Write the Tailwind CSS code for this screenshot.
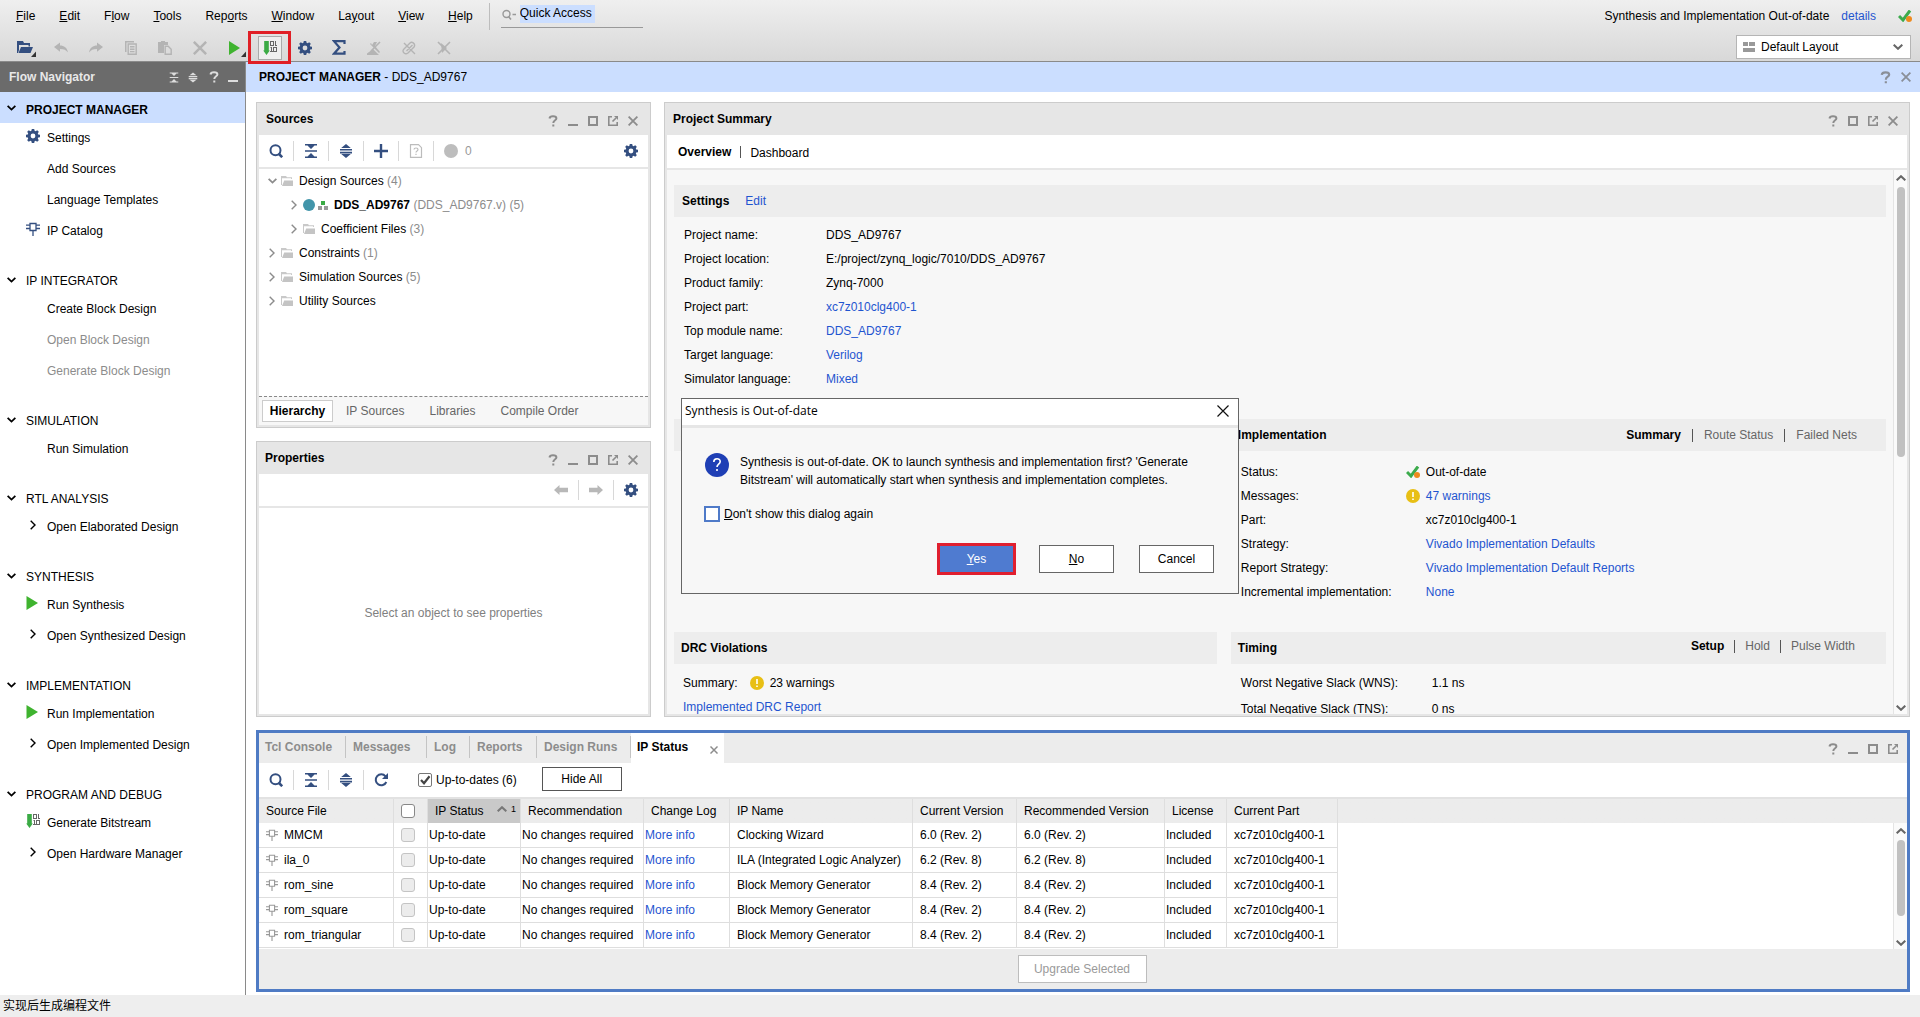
<!DOCTYPE html>
<html lang="en">
<head>
<meta charset="utf-8">
<title>Vivado - DDS_AD9767</title>
<script src="https://cdn.jsdelivr.net/npm/@tailwindcss/browser@4"></script>
</head>
<body class="bg-white text-black text-[12px] leading-4 font-['Liberation_Sans','Noto_Sans_CJK_SC',sans-serif]">
<svg class="hidden" aria-hidden="true">
  <symbol id="gear" viewBox="0 0 14 14"><path fill="currentColor" fill-rule="evenodd" d="M5.8 0h2.4l.4 1.8 1 .4L11.200 1.200l1.600 1.600-1 1.600.4 1 1.800.4v2.400l-1.800.4-.4 1 1 1.600-1.600 1.600-1.600-1-1 .4L8.200 14H5.800l-.4-1.800-1-.4-1.600 1-1.600-1.600 1-1.600-.4-1L0 8.200V5.800l1.800-.4.4-1-1-1.600 1.600-1.600 1.600 1 1-.4zM7 4.600a2.400 2.400 0 1 0 0 4.800 2.400 2.400 0 0 0 0-4.800z"/></symbol>
  <symbol id="search" viewBox="0 0 14 14"><circle cx="6.500" cy="6.300" r="5" fill="none" stroke="currentColor" stroke-width="2"/><path d="M9.500 9.500l3.700 3.700" stroke="currentColor" stroke-width="2.600"/></symbol>
  <symbol id="collapse" viewBox="0 0 14 14"><path fill="currentColor" d="M1 0h12v1.500H10.500L7 5 3.500 1.500H1zM1 14h12v-1.500H10.500L7 9 3.500 12.500H1zM1 6.200h12v1.600H1z" /></symbol>
  <symbol id="expand" viewBox="0 0 14 14"><path fill="currentColor" d="M7 0l4.800 4H2.200zM7 14l4.800-4H2.200zM1 5h12v1.600H1zM1 7.800h12v1.600H1z"/></symbol>
  <symbol id="help" viewBox="0 0 10 12"><path fill="none" stroke="currentColor" stroke-width="2" d="M1.500 3.500C1.700 2 3 1.200 5 1.200s3.400.8 3.400 2.200C8.400 5.300 5.300 5.200 5.300 8M5.300 9.400v2"/></symbol>
  <symbol id="mini" viewBox="0 0 10 10"><path fill="currentColor" d="M0 8h10v2H0z"/></symbol>
  <symbol id="maxi" viewBox="0 0 10 10"><path fill="none" stroke="currentColor" stroke-width="2" d="M1 1h8v8H1z"/></symbol>
  <symbol id="float" viewBox="0 0 10 10"><path fill="none" stroke="currentColor" stroke-width="1.600" d="M4 .8H.8v8.400h8.400V6M4.500 5.500L8 2"/><path fill="currentColor" d="M6 0h4v4z"/></symbol>
  <symbol id="close" viewBox="0 0 10 10"><path fill="none" stroke="currentColor" stroke-width="1.800" d="M.6.6l8.800 8.800M9.400.6L.6 9.400"/></symbol>
  <symbol id="down" viewBox="0 0 10 6"><path fill="none" stroke="currentColor" stroke-width="2" d="M.7.7L5 4.800 9.300.7"/></symbol>
  <symbol id="up" viewBox="0 0 10 6"><path fill="none" stroke="currentColor" stroke-width="2" d="M.7 5.300L5 1.200l4.300 4.100"/></symbol>
  <symbol id="right" viewBox="0 0 6 10"><path fill="none" stroke="currentColor" stroke-width="1.400" d="M.7.7L5 5 .7 9.300"/></symbol>
  <symbol id="chip" viewBox="0 0 14 14"><path fill="none" stroke="currentColor" stroke-width="1.300" d="M4 1.500h6v7H4zM0 3.200h4M0 6.500h4M10 3.200h4M10 6.500h4M7 8.500V14"/></symbol>
  <symbol id="play" viewBox="0 0 12 14"><path fill="#3fb32f" d="M.5 0L12 7 .5 14z"/></symbol>
  <symbol id="bits" viewBox="0 0 14 14"><path fill="#3bab45" d="M1.200 0h4.600v9.500h1L3.500 14 .2 9.500h1z"/><path fill="#666" fill-rule="evenodd" d="M7 0h4v5H7zM8 1v3h2V1zM12 0h1v4h1v1h-2zM8 6h1v4h1v1H7v-1h1V7H7zM10 6h4v5h-4zM11 7v3h2V7z"/></symbol>
  <symbol id="folder" viewBox="0 0 12 10"><path fill="#c9c9c9" d="M0 0h5l1 1.200h5V3H10V2.200H1V9H0z"/><path fill="#c4c4c4" d="M3.200 4.500H12V10H1z"/></symbol>
  <symbol id="stale" viewBox="0 0 14 12"><path fill="none" stroke="#3cab4c" stroke-width="3" d="M1 6l4 4 7-9.500"/><circle cx="11" cy="9" r="3" fill="#ef8a1d"/></symbol>
  <symbol id="warn" viewBox="0 0 14 14"><circle cx="7" cy="7" r="7" fill="#e8bf14"/><path fill="#fff" d="M6.200 3h1.600v5H6.200zM6.200 9.400h1.600V11H6.200z"/></symbol>
  <symbol id="undo" viewBox="0 0 14 10"><path fill="currentColor" d="M0 4.500L6 0v3c4 0 7 2 8 7-2-2.500-4-3.500-8-3.500v2.800z"/></symbol>
  <symbol id="arrow" viewBox="0 0 14 10"><path fill="currentColor" d="M14 5L8.500 0v2.700H0v4.600h8.500V10z"/></symbol>
</svg>

<div class="flex h-screen min-h-[900px] flex-col">
  <header class="flex h-[62px] shrink-0 justify-between border-b border-[#8a8a8a] bg-linear-to-b from-[#efefef] to-[#d8d8d8]">
    <div class="flex flex-col">
      <div class="flex h-[31px] items-start">
        <nav class="flex gap-6 pt-2 pl-4">
          <button><u>F</u>ile</button><button><u>E</u>dit</button><button>F<u>l</u>ow</button><button><u>T</u>ools</button><button>Rep<u>o</u>rts</button><button><u>W</u>indow</button><button>La<u>y</u>out</button><button><u>V</u>iew</button><button><u>H</u>elp</button>
        </nav>
        <div class="mt-[3px] ml-4 h-[27px] w-px bg-[#bdbdbd]"></div>
        <label class="mt-[5px] ml-[11px] flex h-[23px] w-[142px] items-start border-b border-[#999]">
          <svg class="mt-1 ml-px h-3 w-4 text-[#999]" viewBox="0 0 16 12"><circle cx="4.500" cy="5" r="3.500" fill="none" stroke="currentColor" stroke-width="1.400"/><path stroke="currentColor" stroke-width="1.600" d="M6.500 7.500L9 10.500M10.500 5.500H14"/></svg>
          <input aria-label="Quick Access" value="Quick Access" class="ml-0.5 h-[18px] w-[75px] bg-[#cbdeff] pb-0.5 outline-none">
        </label>
      </div>
      <div class="ml-[9px] grid h-[30px] w-[452px] grid-cols-13 items-center justify-items-center text-[#b4b4b4]">
        <button aria-label="Open" class="flex"><svg class="h-[18px] w-5" viewBox="0 0 20 18"><path fill="#344f80" d="M1 2h6l1 2h6v3.500h-1.500V6H3v5l-1 3H1z"/><path fill="#344f80" d="M5 8h12l-2.500 6H2.500z"/><path fill="#333" d="M20 12.500V18h-5z"/></svg></button>
        <button aria-label="Undo"><svg class="h-[11px] w-[14px]"><use href="#undo"/></svg></button>
        <button aria-label="Redo"><svg class="h-[11px] w-[14px] -scale-x-100"><use href="#undo"/></svg></button>
        <button aria-label="Copy"><svg class="h-[14px] w-3" viewBox="0 0 12 14"><path fill="currentColor" d="M0 0h9v1.500H1.500V11H0z"/><path fill="none" stroke="currentColor" stroke-width="1.400" d="M3.200 3h8v10.300h-8zM5 5.800h4.500M5 8.200h4.500M5 10.600h4.500"/></svg></button>
        <button aria-label="Paste"><svg class="h-[14px] w-[14px]" viewBox="0 0 14 14"><path fill="currentColor" d="M0 1h3V0h4v1h3v3H6v8H0z"/><path fill="none" stroke="currentColor" stroke-width="1.400" d="M7.200 5.200h3l3 3v5h-6z"/></svg></button>
        <button aria-label="Delete"><svg class="h-[14px] w-[14px]"><use href="#close"/></svg></button>
        <button aria-label="Run" class="flex"><svg class="ml-1 h-[18px] w-[18px]" viewBox="0 0 18 18"><path fill="#3fb32f" d="M1 2l11 7L1 16z"/><path fill="#333" d="M18 12.500V18h-5z"/></svg></button>
        <div class="z-10 flex h-[33px] w-[43px] items-center justify-center border-3 border-[#e01f26]"><button aria-label="Generate Bitstream" class="flex h-6 w-6 items-center justify-center border border-[#aaa] bg-[#efefef]"><svg class="h-[14px] w-[14px]"><use href="#bits"/></svg></button></div>
        <button aria-label="Settings"><svg class="h-[14px] w-[14px] text-[#344f80]"><use href="#gear"/></svg></button>
        <button aria-label="Report"><svg class="h-[15px] w-[14px]" viewBox="0 0 14 15"><path fill="none" stroke="#344f80" stroke-width="2.200" d="M12.500 4V1.200H2L7.500 7.500 2 13.700h10.500V11"/></svg></button>
        <button aria-label="Edit timing"><svg class="h-[14px] w-[14px]" viewBox="0 0 14 14"><path fill="currentColor" d="M6 8l6 6H0v-1.500zM5 4l2-3h3L8 5l5 6-1 1-9-9 1-1z"/><path stroke="currentColor" stroke-width="1.600" d="M13 1L4 10"/></svg></button>
        <button aria-label="Clear marks"><svg class="h-[14px] w-[14px]" viewBox="0 0 14 14"><path fill="none" stroke="currentColor" stroke-width="1.400" d="M1.500 8.500l6.500-6.500c2-2 6 1 4 4l-6 6c-3 2-6-1-4.500-3.500zM2 2l11 11M4.500 10l6-6"/></svg></button>
        <button aria-label="Cancel marks"><svg class="h-[14px] w-[14px]" viewBox="0 0 14 14"><path fill="none" stroke="currentColor" stroke-width="1.600" d="M1 1l12 12M13 1L1 13"/><path fill="currentColor" d="M4 2l6 5-5 5z"/></svg></button>
      </div>
    </div>
    <div class="flex flex-col items-end">
      <div class="flex h-[35px] items-center pr-2 pb-[3px]"><span>Synthesis and Implementation Out-of-date</span><a href="#" class="ml-3 text-[#1f55d0]">details</a><svg class="ml-[22px] h-3 w-[14px]"><use href="#stale"/></svg></div>
      <div class="relative mr-[9px] flex items-center">
        <select aria-label="Layout" class="h-6 w-[175px] appearance-none border border-[#b5b5b5] bg-white pl-6"><option>Default Layout</option></select>
        <svg class="absolute left-[7px] h-[10px] w-3" viewBox="0 0 12 10"><path fill="#999" d="M0 0h5v4H0zM6 0h6v4H6zM0 6h12v4H0z"/></svg>
        <svg class="pointer-events-none absolute right-2 h-[6px] w-[10px] text-[#666]"><use href="#down"/></svg>
      </div>
    </div>
  </header>

  <div class="flex min-h-0 flex-1">
    <aside class="w-[246px] shrink-0 border-r border-[#8a8a8a] [&_a]:pb-0.5">
      <div class="flex h-[30px] items-center bg-[#6b6b6b] px-[9px] text-[#e8e8e8]">
        <h2 class="flex-1 font-bold">Flow Navigator</h2>
        <div class="flex items-center gap-[9px] text-[#ddd]">
          <svg class="h-[11px] w-[10px]"><use href="#collapse"/></svg><svg class="h-[11px] w-[10px]"><use href="#expand"/></svg><svg class="ml-0.5 h-3 w-[10px]"><use href="#help"/></svg><svg class="-mr-0.5 h-[10px] w-[10px]"><use href="#mini"/></svg>
        </div>
      </div>
      <section class="mb-[21px]">
        <h3 class="flex h-[31px] items-center gap-[10px] bg-[#cbdeff] pt-1 pl-[7px] font-bold"><svg class="-mt-[3px] h-[6px] w-[9px]"><use href="#down"/></svg>PROJECT MANAGER</h3>
        <a href="#" class="flex h-[31px] items-center gap-[7px] pl-[26px]"><svg class="-mt-1 h-[14px] w-[14px] text-[#344f80]"><use href="#gear"/></svg>Settings</a>
        <a href="#" class="flex h-[31px] items-center pl-[47px]">Add Sources</a>
        <a href="#" class="flex h-[31px] items-center pl-[47px]">Language Templates</a>
        <a href="#" class="flex h-[31px] items-center gap-[7px] pl-[26px]"><svg class="-mt-1 h-[14px] w-[14px] text-[#344f80]"><use href="#chip"/></svg>IP Catalog</a>
      </section>
      <section class="mb-[21px]">
        <h3 class="flex h-[26px] items-center gap-[10px] pl-[7px]"><svg class="-mt-[3px] h-[6px] w-[9px]"><use href="#down"/></svg>IP INTEGRATOR</h3>
        <a href="#" class="flex h-[31px] items-center pl-[47px]">Create Block Design</a>
        <a href="#" class="flex h-[31px] items-center pl-[47px] text-[#8c8c8c]">Open Block Design</a>
        <a href="#" class="flex h-[31px] items-center pl-[47px] text-[#8c8c8c]">Generate Block Design</a>
      </section>
      <section class="mb-[21px]">
        <h3 class="flex h-[26px] items-center gap-[10px] pl-[7px]"><svg class="-mt-[3px] h-[6px] w-[9px]"><use href="#down"/></svg>SIMULATION</h3>
        <a href="#" class="flex h-[31px] items-center pl-[47px]">Run Simulation</a>
      </section>
      <section class="mb-[21px]">
        <h3 class="flex h-[26px] items-center gap-[10px] pl-[7px]"><svg class="-mt-[3px] h-[6px] w-[9px]"><use href="#down"/></svg>RTL ANALYSIS</h3>
        <a href="#" class="flex h-[31px] items-center gap-[11px] pl-[30px]"><svg class="-mt-[3px] h-[10px] w-[6px]"><use href="#right"/></svg>Open Elaborated Design</a>
      </section>
      <section class="mb-[21px]">
        <h3 class="flex h-[26px] items-center gap-[10px] pl-[7px]"><svg class="-mt-[3px] h-[6px] w-[9px]"><use href="#down"/></svg>SYNTHESIS</h3>
        <a href="#" class="flex h-[31px] items-center gap-[9px] pl-[26px]"><svg class="-mt-[3px] h-[14px] w-3"><use href="#play"/></svg>Run Synthesis</a>
        <a href="#" class="flex h-[31px] items-center gap-[11px] pl-[30px]"><svg class="-mt-[3px] h-[10px] w-[6px]"><use href="#right"/></svg>Open Synthesized Design</a>
      </section>
      <section class="mb-[21px]">
        <h3 class="flex h-[26px] items-center gap-[10px] pl-[7px]"><svg class="-mt-[3px] h-[6px] w-[9px]"><use href="#down"/></svg>IMPLEMENTATION</h3>
        <a href="#" class="flex h-[31px] items-center gap-[9px] pl-[26px]"><svg class="-mt-[3px] h-[14px] w-3"><use href="#play"/></svg>Run Implementation</a>
        <a href="#" class="flex h-[31px] items-center gap-[11px] pl-[30px]"><svg class="-mt-[3px] h-[10px] w-[6px]"><use href="#right"/></svg>Open Implemented Design</a>
      </section>
      <section>
        <h3 class="flex h-[26px] items-center gap-[10px] pl-[7px]"><svg class="-mt-[3px] h-[6px] w-[9px]"><use href="#down"/></svg>PROGRAM AND DEBUG</h3>
        <a href="#" class="flex h-[31px] items-center gap-[7px] pl-[26px]"><svg class="-mt-1 h-[14px] w-[14px]"><use href="#bits"/></svg>Generate Bitstream</a>
        <a href="#" class="flex h-[31px] items-center gap-[11px] pl-[30px]"><svg class="-mt-[3px] h-[10px] w-[6px]"><use href="#right"/></svg>Open Hardware Manager</a>
      </section>
    </aside>

    <main class="flex min-w-0 flex-1 flex-col">
      <div class="flex h-[30px] shrink-0 items-center bg-[#cbdeff] pr-[9px] pl-[13px]">
        <h1 class="flex-1"><b>PROJECT MANAGER</b> - DDS_AD9767</h1>
        <div class="flex items-center gap-[10px] text-[#8a8f98]"><svg class="h-[13px] w-[11px]"><use href="#help"/></svg><svg class="h-[10px] w-[10px]"><use href="#close"/></svg></div>
      </div>

      <div class="flex min-h-0 flex-1 gap-[13px] pt-[10px] pr-[10px] pl-[10px]">
        <div class="flex w-[395px] shrink-0 flex-col gap-[13px]">
          <section class="flex h-[326px] flex-col border border-[#ccc] bg-[#e6e6e6] px-0.5 pb-0.5">
            <div class="flex h-8 shrink-0 items-center pr-[10px] pl-[7px]">
              <h2 class="flex-1 font-bold">Sources</h2>
              <div class="mt-1 flex items-center gap-[10px] text-[#8c8c8c]"><svg class="h-3 w-[10px]"><use href="#help"/></svg><svg class="h-[10px] w-[10px]"><use href="#mini"/></svg><svg class="h-[10px] w-[10px]"><use href="#maxi"/></svg><svg class="h-[10px] w-[10px]"><use href="#float"/></svg><svg class="h-[10px] w-[10px]"><use href="#close"/></svg></div>
            </div>
            <div class="mb-0.5 flex h-8 shrink-0 items-center gap-[10px] bg-white pr-[10px] pl-[10px] text-[#344f80]">
              <svg class="h-[14px] w-[14px]"><use href="#search"/></svg><i class="h-5 w-px bg-[#d8d8d8]"></i>
              <svg class="h-[14px] w-[14px]"><use href="#collapse"/></svg><i class="h-5 w-px bg-[#d8d8d8]"></i>
              <svg class="h-[14px] w-[14px]"><use href="#expand"/></svg><i class="h-5 w-px bg-[#d8d8d8]"></i>
              <svg class="h-[14px] w-[14px]" viewBox="0 0 14 14"><path stroke="currentColor" stroke-width="2.400" d="M0 7h14M7 0v14"/></svg><i class="h-5 w-px bg-[#d8d8d8]"></i>
              <svg class="h-[14px] w-[14px] text-[#bcbcbc]" viewBox="0 0 14 14"><path fill="none" stroke="currentColor" stroke-width="1.200" d="M1.500.7h8l3 3v9.600h-11zM5 5.500C5 3.500 9 3.500 9 5.500 9 7 7 6.800 7 8.500M7 9.700v1.400"/></svg><i class="h-5 w-px bg-[#d8d8d8]"></i>
              <span class="flex flex-1 items-center gap-[7px] text-[#999]"><i class="h-[14px] w-[14px] rounded-full bg-[#bdbdbd]"></i>0</span>
              <svg class="h-[14px] w-[14px]"><use href="#gear"/></svg>
            </div>
            <ul class="min-h-0 flex-1 bg-white text-[#8c8c8c] [&_b]:text-black [&_span]:text-black">
              <li class="flex h-6 items-center pl-[9px]"><svg class="mr-1 h-[6px] w-[9px]"><use href="#down"/></svg><svg class="mr-[6px] h-[10px] w-3"><use href="#folder"/></svg><span>Design Sources</span>&nbsp;(4)</li>
              <li class="flex h-6 items-center pl-8"><svg class="mr-[6px] h-[10px] w-[6px]"><use href="#right"/></svg><i class="h-3 w-3 rounded-full bg-[#4295aa]"></i><svg class="mr-[6px] ml-[3px] h-[9px] w-[10px]" viewBox="0 0 10 9"><path fill="#3bab45" d="M3 0h4v4H3z"/><path fill="#999" d="M0 5h4v4H0zM6 5h4v4H6z"/></svg><b>DDS_AD9767</b>&nbsp;(DDS_AD9767.v) (5)</li>
              <li class="flex h-6 items-center pl-8"><svg class="mr-[6px] h-[10px] w-[6px]"><use href="#right"/></svg><svg class="mr-[6px] h-[10px] w-3"><use href="#folder"/></svg><span>Coefficient Files</span>&nbsp;(3)</li>
              <li class="flex h-6 items-center pl-[10px]"><svg class="mr-[6px] h-[10px] w-[6px]"><use href="#right"/></svg><svg class="mr-[6px] h-[10px] w-3"><use href="#folder"/></svg><span>Constraints</span>&nbsp;(1)</li>
              <li class="flex h-6 items-center pl-[10px]"><svg class="mr-[6px] h-[10px] w-[6px]"><use href="#right"/></svg><svg class="mr-[6px] h-[10px] w-3"><use href="#folder"/></svg><span>Simulation Sources</span>&nbsp;(5)</li>
              <li class="flex h-6 items-center pl-[10px]"><svg class="mr-[6px] h-[10px] w-[6px]"><use href="#right"/></svg><svg class="mr-[6px] h-[10px] w-3"><use href="#folder"/></svg><span>Utility Sources</span></li>
            </ul>
            <div class="flex h-[29px] shrink-0 items-center gap-[25px] border-t border-dashed border-[#888] bg-[#f7f7f7] pl-[3px] text-[#666]">
              <button class="-mr-3 h-[22px] w-[71px] border border-[#ccc] bg-white font-bold text-black">Hierarchy</button><button>IP Sources</button><button>Libraries</button><button>Compile Order</button>
            </div>
          </section>

          <section class="flex min-h-0 flex-1 flex-col border border-[#ccc] bg-[#e6e6e6] px-0.5 pb-0.5">
            <div class="flex h-8 shrink-0 items-center pr-[10px] pl-[6px]">
              <h2 class="flex-1 font-bold">Properties</h2>
              <div class="mt-1 flex items-center gap-[10px] text-[#8c8c8c]"><svg class="h-3 w-[10px]"><use href="#help"/></svg><svg class="h-[10px] w-[10px]"><use href="#mini"/></svg><svg class="h-[10px] w-[10px]"><use href="#maxi"/></svg><svg class="h-[10px] w-[10px]"><use href="#float"/></svg><svg class="h-[10px] w-[10px]"><use href="#close"/></svg></div>
            </div>
            <div class="mb-0.5 flex h-8 shrink-0 items-center justify-end gap-[10px] bg-white pr-[10px] text-[#b8b8b8]">
              <svg class="h-[10px] w-[14px] rotate-180"><use href="#arrow"/></svg><i class="h-5 w-px bg-[#d8d8d8]"></i><svg class="h-[10px] w-[14px]"><use href="#arrow"/></svg><i class="h-5 w-px bg-[#d8d8d8]"></i><svg class="h-[14px] w-[14px] text-[#344f80]"><use href="#gear"/></svg>
            </div>
            <div class="flex min-h-0 flex-1 items-center justify-center bg-white pt-1 text-[#808080]">Select an object to see properties</div>
          </section>
        </div>

        <section class="relative flex min-w-0 flex-1 flex-col border border-[#ccc] bg-[#e6e6e6] px-0.5 pb-0.5">
          <div class="flex h-8 shrink-0 items-center pr-[9px] pl-[6px]">
            <h2 class="flex-1 font-bold">Project Summary</h2>
            <div class="mt-1 flex items-center gap-[10px] text-[#8c8c8c]"><svg class="h-3 w-[10px]"><use href="#help"/></svg><svg class="h-[10px] w-[10px]"><use href="#maxi"/></svg><svg class="h-[10px] w-[10px]"><use href="#float"/></svg><svg class="h-[10px] w-[10px]"><use href="#close"/></svg></div>
          </div>
          <div class="mb-0.5 flex h-[33px] shrink-0 items-center gap-[9px] bg-white pl-[11px]"><button class="font-bold">Overview</button><i class="h-3 w-px bg-[#555]"></i><button class="pt-0.5">Dashboard</button></div>
          <div class="flex min-h-0 flex-1 bg-[#f7f7f7]">
            <div class="min-w-0 flex-1 overflow-hidden pt-[15px] pr-[7px] pl-[7px]">
              <div class="flex h-8 items-center gap-4 bg-[#ededed] pl-2"><h3 class="font-bold">Settings</h3><a href="#" class="text-[#1f55d0]">Edit</a></div>
              <dl class="mt-[6px] mb-7 grid grid-cols-[142px_1fr] pl-[10px] leading-6">
                <dt>Project name:</dt><dd>DDS_AD9767</dd>
                <dt>Project location:</dt><dd>E:/project/zynq_logic/7010/DDS_AD9767</dd>
                <dt>Product family:</dt><dd>Zynq-7000</dd>
                <dt>Project part:</dt><dd><a href="#" class="text-[#1f55d0]">xc7z010clg400-1</a></dd>
                <dt>Top module name:</dt><dd><a href="#" class="text-[#1f55d0]">DDS_AD9767</a></dd>
                <dt>Target language:</dt><dd><a href="#" class="text-[#1f55d0]">Verilog</a></dd>
                <dt>Simulator language:</dt><dd><a href="#" class="text-[#1f55d0]">Mixed</a></dd>
              </dl>
              <div class="grid grid-cols-[29fr_35fr] gap-x-[14px]">
                <div class="flex h-8 items-center bg-[#ededed] pl-[7px]"><h3 class="font-bold">Synthesis</h3></div>
                <div>
                  <div class="flex h-8 items-center gap-[11px] bg-[#ededed] pr-[29px] pl-[7px] text-[#666]"><h3 class="flex-1 font-bold text-black">Implementation</h3><button class="font-bold text-black">Summary</button><i class="h-[13px] w-px bg-[#555]"></i><button>Route Status</button><i class="h-[13px] w-px bg-[#555]"></i><button>Failed Nets</button></div>
                  <dl class="mt-[9px] mb-7 grid grid-cols-[165px_20px_1fr] items-center pl-[10px] leading-6">
                    <dt>Status:</dt><dd><svg class="h-3 w-[14px]"><use href="#stale"/></svg></dd><dd>Out-of-date</dd>
                    <dt>Messages:</dt><dd><svg class="h-[14px] w-[14px]"><use href="#warn"/></svg></dd><dd><a href="#" class="text-[#1f55d0]">47 warnings</a></dd>
                    <dt class="col-span-2">Part:</dt><dd>xc7z010clg400-1</dd>
                    <dt class="col-span-2">Strategy:</dt><dd><a href="#" class="text-[#1f55d0]">Vivado Implementation Defaults</a></dd>
                    <dt class="col-span-2">Report Strategy:</dt><dd><a href="#" class="text-[#1f55d0]">Vivado Implementation Default Reports</a></dd>
                    <dt class="col-span-2">Incremental implementation:</dt><dd><a href="#" class="text-[#1f55d0]">None</a></dd>
                  </dl>
                </div>
                <div>
                  <div class="flex h-8 items-center bg-[#ededed] pl-[7px]"><h3 class="font-bold">DRC Violations</h3></div>
                  <div class="mt-[7px] pl-[9px] leading-6">
                    <div class="flex items-center">Summary:<svg class="mr-[6px] ml-3 h-[14px] w-[14px]"><use href="#warn"/></svg>23 warnings</div>
                    <a href="#" class="block text-[#1f55d0]">Implemented DRC Report</a>
                  </div>
                </div>
                <div>
                  <div class="flex h-8 items-center gap-[10px] bg-[#ededed] pr-[31px] pl-[7px] text-[#666]"><h3 class="flex-1 font-bold text-black">Timing</h3><button class="-mt-1 font-bold text-black">Setup</button><i class="-mt-1 h-[13px] w-px bg-[#555]"></i><button class="-mt-1">Hold</button><i class="-mt-1 h-[13px] w-px bg-[#555]"></i><button class="-mt-1">Pulse Width</button></div>
                  <dl class="mt-[6px] grid grid-cols-[191px_1fr] pl-[10px] leading-[26px]"><dt>Worst Negative Slack (WNS):</dt><dd>1.1 ns</dd><dt>Total Negative Slack (TNS):</dt><dd>0 ns</dd></dl>
                </div>
              </div>
            </div>
            <div class="flex w-[14px] shrink-0 flex-col items-center border-l border-[#e4e4e4] bg-[#fafafa] pt-[5px] pb-[3px] text-[#666]"><svg class="h-[6px] w-[10px]"><use href="#up"/></svg><i class="mt-[6px] h-[270px] w-2 rounded bg-[#c1c1c1]"></i><svg class="mt-auto h-[6px] w-[10px]"><use href="#down"/></svg></div>
          </div>

          <div role="dialog" aria-labelledby="dlg" class="absolute top-[295px] left-4 z-20 flex h-[196px] w-[558px] flex-col border border-[#666] bg-[#f7f7f7]">
            <div class="flex h-[29px] shrink-0 items-center justify-between border-b-3 border-[#e6e6e6] bg-white pr-[9px] pb-0.5 pl-[3px]"><h2 id="dlg" class="font-['Open_Sans',sans-serif]">Synthesis is Out-of-date</h2><button aria-label="Close"><svg class="h-3 w-3" viewBox="0 0 12 12"><path stroke="#111" stroke-width="1.200" d="M.5.5l11 11M11.500.5l-11 11"/></svg></button></div>
            <div class="flex gap-[11px] pt-[25px] pl-[23px]">
              <svg class="h-6 w-6" viewBox="0 0 24 24"><circle cx="12" cy="12" r="12" fill="#1f3fb5"/><path fill="none" stroke="#fff" stroke-width="1.600" d="M8.800 9c0-4.200 6.400-4.200 6.400-.5 0 2.700-3.200 2.700-3.200 5.500M12 16v2"/></svg>
              <p class="leading-[18px]">Synthesis is out-of-date. OK to launch synthesis and implementation first? 'Generate<br>Bitstream' will automatically start when synthesis and implementation completes.</p>
            </div>
            <label class="mt-[17px] ml-[22px] flex items-center gap-1"><input type="checkbox" class="h-4 w-4 appearance-none border-2 border-[#4f7ac8] bg-white"><span><u>D</u>on't show this dialog again</span></label>
            <div class="mt-[21px] flex items-center justify-end gap-[25px] pr-[24px]">
              <button class="-mr-0.5 h-8 w-[79px] border-3 border-[#e01f2f] bg-[#4f7bd0] text-white"><u>Y</u>es</button><button class="h-7 w-[75px] border border-[#666] bg-white"><u>N</u>o</button><button class="h-7 w-[75px] border border-[#666] bg-white">Cancel</button>
            </div>
          </div>
        </section>
      </div>

      <section class="mt-[13px] mr-[10px] mb-[3px] ml-[10px] flex h-[262px] shrink-0 flex-col border-3 border-[#4f7bc4] bg-[#ececec]">
        <div class="flex h-[30px] shrink-0 items-start text-[#8c8c8c]">
          <div class="flex h-[25px] items-center pt-[3px] font-bold">
            <button class="h-full w-[87px] border-r border-[#c4c4c4] pl-[6px] text-left">Tcl Console</button><button class="h-full w-[81px] border-r border-[#c4c4c4] pl-[7px] text-left">Messages</button><button class="h-full w-[43px] border-r border-[#c4c4c4] pl-[7px] text-left">Log</button><button class="h-full w-[67px] border-r border-[#c4c4c4] pl-[7px] text-left">Reports</button><button class="h-full w-[94px] border-r border-[#c4c4c4] pl-[7px] text-left">Design Runs</button>
          </div>
          <div class="flex h-[30px] w-[93px] items-center justify-between bg-white pr-[6px] pl-[6px]"><button class="pb-0.5 font-bold text-black">IP Status</button><button aria-label="Close tab" class="pt-1"><svg class="h-2 w-2"><use href="#close"/></svg></button></div>
          <div class="mt-[10px] mr-[9px] ml-auto flex items-center gap-[10px]"><svg class="h-3 w-[10px]"><use href="#help"/></svg><svg class="h-[10px] w-[10px]"><use href="#mini"/></svg><svg class="h-[10px] w-[10px]"><use href="#maxi"/></svg><svg class="h-[10px] w-[10px]"><use href="#float"/></svg></div>
        </div>
        <div class="flex h-9 shrink-0 items-center gap-[10px] border-b-2 border-[#e2e2e2] bg-white pl-[10px] text-[#344f80]">
          <svg class="h-[14px] w-[14px]"><use href="#search"/></svg><i class="h-5 w-px bg-[#d8d8d8]"></i>
          <svg class="h-[14px] w-[14px]"><use href="#collapse"/></svg><i class="h-5 w-px bg-[#d8d8d8]"></i>
          <svg class="h-[14px] w-[14px]"><use href="#expand"/></svg><i class="h-5 w-px bg-[#d8d8d8]"></i>
          <svg class="h-[14px] w-[14px]" viewBox="0 0 14 14"><path fill="none" stroke="currentColor" stroke-width="2" d="M11.500 3.300A5.500 5.500 0 1 0 12.300 9"/><path fill="currentColor" d="M14 0v6H8z"/></svg>
          <label class="ml-5 flex items-center gap-1 text-black"><span class="relative flex"><input type="checkbox" checked class="h-[14px] w-[14px] appearance-none rounded-xs border border-[#777] bg-white"><svg class="pointer-events-none absolute h-[14px] w-[14px]" viewBox="0 0 14 14"><path fill="none" stroke="#444" stroke-width="2.200" d="M3 7l3 3.200 5.500-7"/></svg></span>Up-to-dates (6)</label>
          <button class="mb-0.5 ml-[15px] h-6 w-20 border border-[#555] bg-white text-black">Hide All</button>
        </div>
        <div class="flex h-[150px] shrink-0 overflow-hidden bg-white">
          <div class="flex-1">
            <div class="flex bg-linear-to-b from-[#ececec] from-[24px] to-white to-[24px]">
            <table class="w-[1079px] table-fixed border-separate border-spacing-0 text-left whitespace-nowrap [&_td]:border-r [&_td]:border-b [&_td]:border-[#dedede] [&_td]:p-0 [&_td]:pl-[7px] [&_th]:border-r [&_th]:border-[#dedede] [&_th]:p-0 [&_th]:pl-[7px] [&_th]:font-normal">
              <colgroup><col class="w-[135px]"><col class="w-[34px]"><col class="w-[93px]"><col class="w-[123px]"><col class="w-[86px]"><col class="w-[183px]"><col class="w-[104px]"><col class="w-[148px]"><col class="w-[62px]"><col class="w-[111px]"></colgroup>
              <thead><tr class="h-6"><th>Source File</th><th><input type="checkbox" aria-label="Select all" class="block h-[14px] w-[14px] appearance-none rounded-[3px] border border-[#888] bg-white"></th><th class="bg-[#c9c9c9]"><span class="flex items-center">IP Status<svg class="mr-1 mb-1 ml-auto h-[6px] w-[10px] text-[#777]"><use href="#up"/></svg><small class="mr-1 mb-1 text-[9px] leading-3">1</small></span></th><th>Recommendation</th><th>Change Log</th><th>IP Name</th><th>Current Version</th><th>Recommended Version</th><th>License</th><th>Current Part</th></tr></thead>
              <tbody id="rows"></tbody>
            </table>
            </div>
          </div>
          <div class="flex w-[14px] shrink-0 flex-col bg-[#ececec] pt-6"><div class="flex flex-1 flex-col items-center border-l border-[#e4e4e4] bg-[#fafafa] pt-[5px] pb-[3px] text-[#666]"><svg class="h-[6px] w-[10px]"><use href="#up"/></svg><i class="mt-[6px] h-[76px] w-2 rounded bg-[#c1c1c1]"></i><svg class="mt-auto h-[6px] w-[10px]"><use href="#down"/></svg></div></div>
        </div>
        <div class="flex flex-1 items-center justify-center pr-0.5"><button disabled class="h-7 w-[129px] border border-[#bdbdbd] bg-white text-[#9a9a9a]">Upgrade Selected</button></div>
      </section>
    </main>
  </div>
  <footer class="flex h-[22px] shrink-0 items-center bg-[#eee] pl-[3px]" lang="zh">实现后生成编程文件</footer>
</div>
<script>
const ips = [
  ['MMCM', 'Clocking Wizard', '6.0 (Rev. 2)'],
  ['ila_0', 'ILA (Integrated Logic Analyzer)', '6.2 (Rev. 8)'],
  ['rom_sine', 'Block Memory Generator', '8.4 (Rev. 2)'],
  ['rom_square', 'Block Memory Generator', '8.4 (Rev. 2)'],
  ['rom_triangular', 'Block Memory Generator', '8.4 (Rev. 2)'],
];
document.getElementById('rows').innerHTML = ips.map(([file, name, ver]) => `
  <tr class="h-[25px]"><td><span class="flex items-center gap-[6px]"><svg class="h-3 w-3 text-[#999]"><use href="#chip"/></svg>${file}</span></td>
  <td><input type="checkbox" disabled aria-label="Select ${file}" class="block h-[14px] w-[14px] appearance-none rounded-[3px] border border-[#c4c4c4] bg-[#ececec]"></td>
  <td><span class="-ml-[6px]">Up-to-date</span></td><td><span class="-ml-[6px]">No changes required</span></td><td><a href="#" class="-ml-[6px] text-[#1f55d0]">More info</a></td>
  <td>${name}</td><td>${ver}</td><td>${ver}</td><td><span class="-ml-[6px]">Included</span></td><td>xc7z010clg400-1</td></tr>`).join('');
</script>
</body>
</html>
